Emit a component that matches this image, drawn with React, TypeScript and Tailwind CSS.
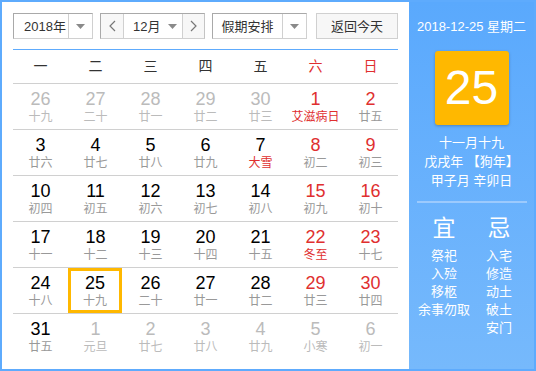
import React from "react";

const FONT = { fontFamily: '"Liberation Sans", Arial, "Noto Sans CJK SC", sans-serif' };

type Cell = { d: number; l: string; other?: boolean; red?: boolean; lred?: boolean; today?: boolean };

const rows: Cell[][] = [
  [
    { d: 26, l: "十九", other: true },
    { d: 27, l: "二十", other: true },
    { d: 28, l: "廿一", other: true },
    { d: 29, l: "廿二", other: true },
    { d: 30, l: "廿三", other: true },
    { d: 1, l: "艾滋病日", red: true, lred: true },
    { d: 2, l: "廿五", red: true },
  ],
  [
    { d: 3, l: "廿六" },
    { d: 4, l: "廿七" },
    { d: 5, l: "廿八" },
    { d: 6, l: "廿九" },
    { d: 7, l: "大雪", lred: true },
    { d: 8, l: "初二", red: true },
    { d: 9, l: "初三", red: true },
  ],
  [
    { d: 10, l: "初四" },
    { d: 11, l: "初五" },
    { d: 12, l: "初六" },
    { d: 13, l: "初七" },
    { d: 14, l: "初八" },
    { d: 15, l: "初九", red: true },
    { d: 16, l: "初十", red: true },
  ],
  [
    { d: 17, l: "十一" },
    { d: 18, l: "十二" },
    { d: 19, l: "十三" },
    { d: 20, l: "十四" },
    { d: 21, l: "十五" },
    { d: 22, l: "冬至", red: true, lred: true },
    { d: 23, l: "十七", red: true },
  ],
  [
    { d: 24, l: "十八" },
    { d: 25, l: "十九", today: true },
    { d: 26, l: "二十" },
    { d: 27, l: "廿一" },
    { d: 28, l: "廿二" },
    { d: 29, l: "廿三", red: true },
    { d: 30, l: "廿四", red: true },
  ],
  [
    { d: 31, l: "廿五" },
    { d: 1, l: "元旦", other: true },
    { d: 2, l: "廿七", other: true },
    { d: 3, l: "廿八", other: true },
    { d: 4, l: "廿九", other: true },
    { d: 5, l: "小寒", other: true },
    { d: 6, l: "初一", other: true },
  ],
];

const weekdays = ["一", "二", "三", "四", "五", "六", "日"];

function Caret() {
  return (
    <svg width="9" height="5" viewBox="0 0 9 5" className="shrink-0">
      <path d="M0 0 L9 0 L4.5 5 Z" fill="#8a8a8a" />
    </svg>
  );
}

function Chevron({ dir }: { dir: "l" | "r" }) {
  return (
    <svg width="7" height="12" viewBox="0 0 7 12">
      <polyline
        points={dir === "l" ? "6,1 1,6 6,11" : "1,1 6,6 1,11"}
        fill="none"
        stroke="#777"
        strokeWidth="1.2"
      />
    </svg>
  );
}

export default function App() {
  return (
    <div className="w-[536px] h-[371px] border-2 border-[#5eabfd] flex bg-white" style={FONT}>
      <div className="w-[407px] flex flex-col pl-[11px] pr-[11px] pt-[11px]">
        {/* toolbar */}
        <div className="flex h-[26px] text-[13px] text-[#333] whitespace-nowrap">
          <div className="w-[80px] h-[26px] flex border border-[#a9a9a9] border-r-[#d0d0d0] border-b-[#d0d0d0] bg-white">
            <div className="w-[54px] flex items-center pl-[10px] leading-none">2018年</div>
            <div className="flex-1 flex items-center justify-center border-l border-[#d0d0d0]">
              <Caret />
            </div>
          </div>
          <div className="ml-[7px] w-[105px] h-[26px] flex border border-[#a9a9a9] border-r-[#c4c4c4] border-b-[#d0d0d0]">
            <div className="w-[22px] flex items-center justify-center bg-[#f7f7f7]">
              <Chevron dir="l" />
            </div>
            <div className="w-[60px] flex items-center border-l border-r border-[#d0d0d0] bg-white pl-[9px] gap-[8px]">
              <span className="leading-none">12月</span>
              <Caret />
            </div>
            <div className="flex-1 flex items-center justify-center bg-[#f7f7f7]">
              <Chevron dir="r" />
            </div>
          </div>
          <div className="ml-[7px] w-[95px] h-[26px] flex border border-[#a9a9a9] border-r-[#d0d0d0] border-b-[#d0d0d0] bg-white">
            <div className="w-[69px] flex items-center justify-center leading-none">假期安排</div>
            <div className="flex-1 flex items-center justify-center border-l border-[#d0d0d0]">
              <Caret />
            </div>
          </div>
          <div className="ml-[9px] w-[82px] h-[26px] flex items-center justify-center border border-[#d0d0d0] bg-[#f7f7f7] leading-none">
            返回今天
          </div>
        </div>

        {/* blue line */}
        <div className="mt-[10px] h-px bg-[#5eabfd]" />

        {/* weekday header */}
        <div className="grid grid-cols-7 h-[34px] border-b border-[#d0d0d0] text-[14px]">
          {weekdays.map((w, i) => (
            <div
              key={w}
              className={`flex items-center justify-center ${i >= 5 ? "text-[#e02f2f]" : "text-[#333]"}`}
            >
              {w}
            </div>
          ))}
        </div>

        {/* rows */}
        {rows.map((row, ri) => (
          <div
            key={ri}
            className={`grid grid-cols-7 ${ri < rows.length - 1 ? "border-b border-[#d0d0d0]" : ""}`}
          >
            {row.map((c, ci) => {
              const numColor = c.other ? "text-[#bbbbbb]" : c.red ? "text-[#e02f2f]" : "text-[#000]";
              const lunColor = c.other ? "text-[#bbbbbb]" : c.lred ? "text-[#e02f2f]" : "text-[#999]";
              return (
                <div
                  key={ci}
                  className={`h-[45px] flex flex-col items-center pt-[5px] ${
                    c.today ? "shadow-[inset_0_0_0_3px_#ffb800] mr-px" : ""
                  }`}
                >
                  <div className={`text-[18px] leading-[20px] ${numColor}`}>{c.d}</div>
                  <div className={`text-[12px] leading-[16px] whitespace-nowrap ${lunColor}`}>{c.l}</div>
                </div>
              );
            })}
          </div>
        ))}
      </div>

      {/* right panel */}
      <div className="flex-1 flex flex-col items-center bg-gradient-to-b from-[#5aa9fd] to-[#76b9fc] text-white pt-[16px]">
        <div className="text-[13px] leading-[18px] whitespace-nowrap">2018-12-25 星期二</div>
        <div className="mt-[15px] w-[74px] h-[74px] rounded-[3px] bg-[#ffb800] flex items-center justify-center text-[48px] leading-none shadow-[0_1px_3px_rgba(0,0,0,0.25)]">
          25
        </div>
        <div className="mt-[8px] flex flex-col items-center text-[13px] leading-[19px] whitespace-nowrap">
          <div>十一月十九</div>
          <div>戊戌年 【狗年】</div>
          <div>甲子月 辛卯日</div>
        </div>
        <div className="mt-[11px] w-[110px] h-[2px] bg-[#9ccafd]" />
        <div className="w-[110px] flex mt-[11px]">
          <div className="w-[55px] flex flex-col items-center">
            <div className="text-[23px] leading-[28px]">宜</div>
            <div className="mt-[5px] flex flex-col items-center text-[13px] leading-[18px] whitespace-nowrap">
              <div>祭祀</div>
              <div>入殓</div>
              <div>移柩</div>
              <div>余事勿取</div>
            </div>
          </div>
          <div className="w-[55px] flex flex-col items-center">
            <div className="text-[23px] leading-[28px]">忌</div>
            <div className="mt-[5px] flex flex-col items-center text-[13px] leading-[18px] whitespace-nowrap">
              <div>入宅</div>
              <div>修造</div>
              <div>动土</div>
              <div>破土</div>
              <div>安门</div>
            </div>
          </div>
        </div>
      </div>
    </div>
  );
}
